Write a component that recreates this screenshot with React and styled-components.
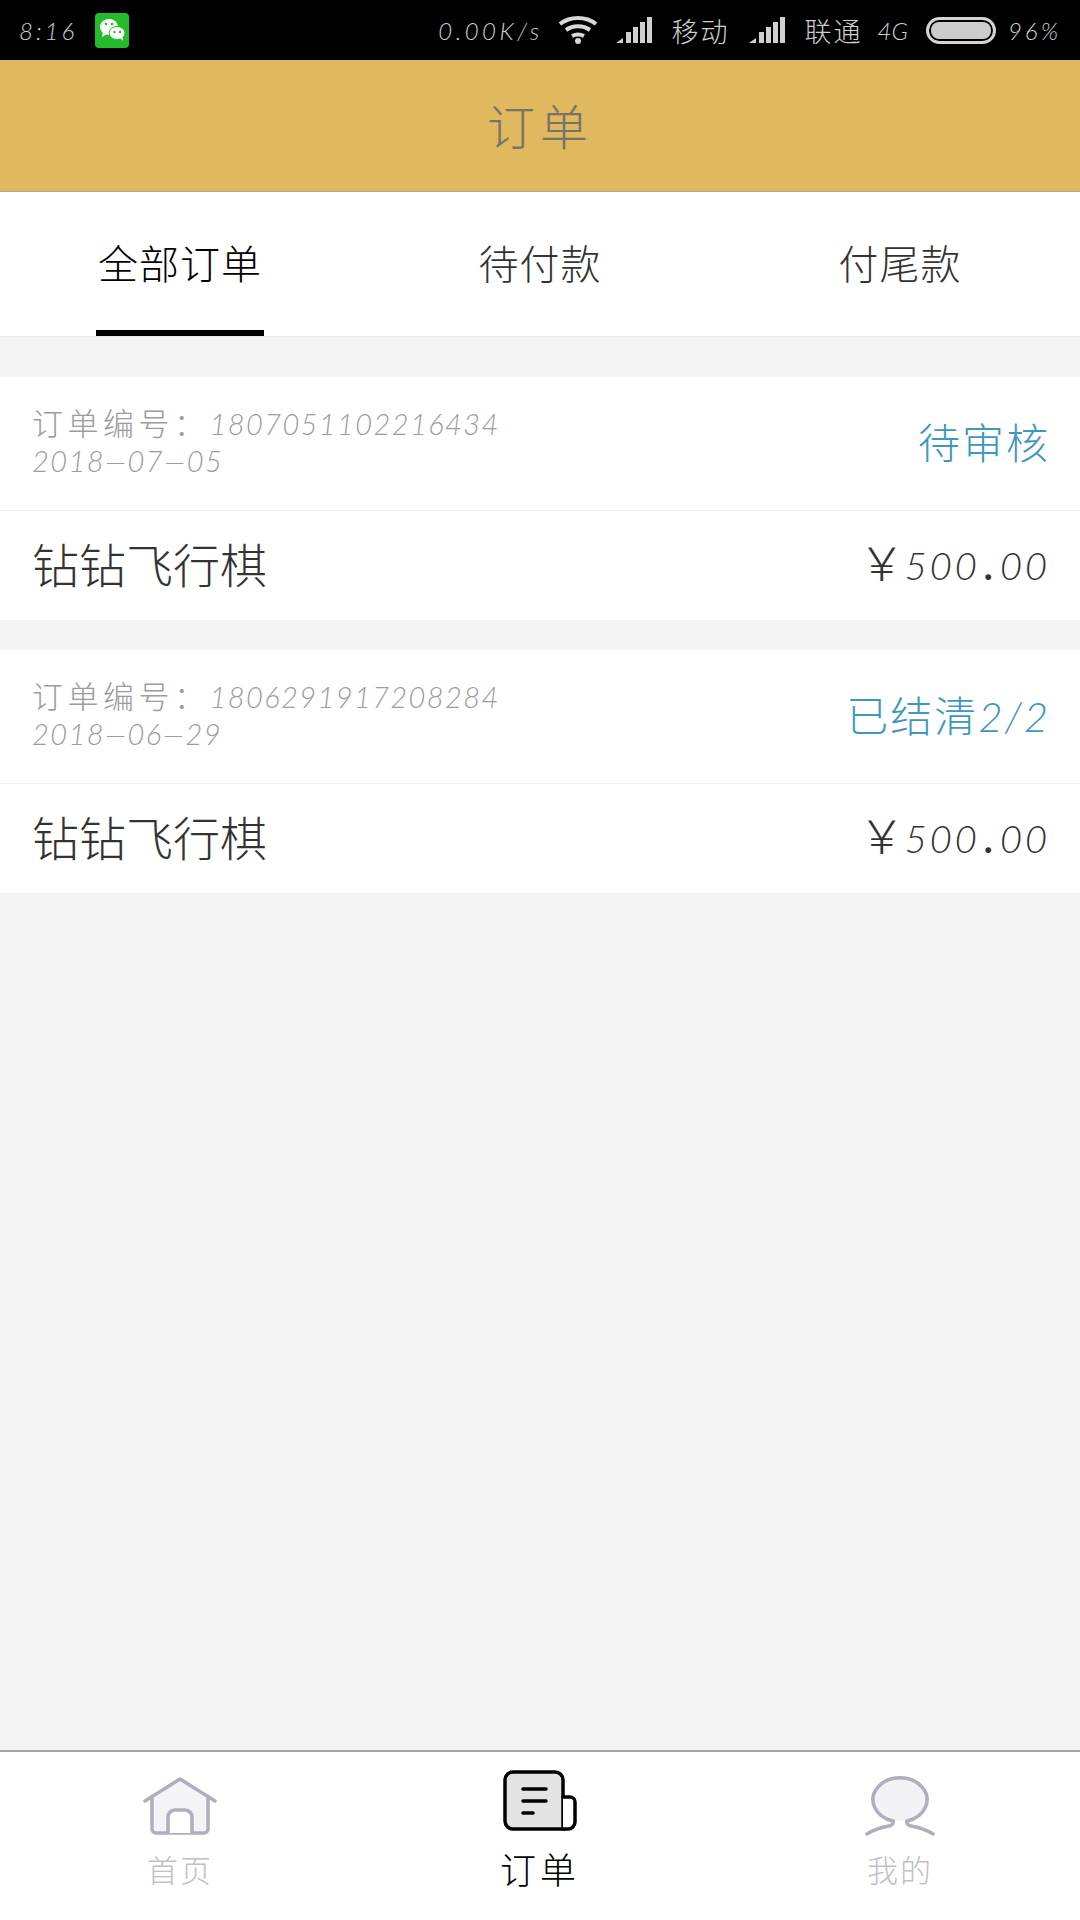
import React from 'react'
import styled, { createGlobalStyle } from 'styled-components'

const GlobalStyle = createGlobalStyle`
  html, body {
    margin: 0;
    padding: 0;
    background: #f4f4f4;
  }
  * {
    box-sizing: border-box;
  }
`

const hand = `Lato, "Noto Sans CJK SC", sans-serif`

const Page = styled.div`
  width: 1080px;
  height: 1920px;
  display: flex;
  flex-direction: column;
  background: #f4f4f4;
  font-family: ${hand};
  font-weight: 300;
  overflow: hidden;
`

const StatusBar = styled.div`
  height: 60px;
  background: #000;
  color: #cfcfcf;
  display: flex;
  align-items: center;
  padding: 0 19px;
  font-size: 24px;
  font-style: italic;
  letter-spacing: 3px;
`

const Clock = styled.span`
  margin-right: 18px;
`

const Net = styled.span`
  margin-left: auto;
  margin-right: 15px;
  letter-spacing: 3.5px;
`

const WifiSlot = styled.span`
  display: flex;
  margin-right: 18px;
`

const Carrier = styled.span`
  font-style: normal;
  font-size: 27px;
  letter-spacing: 2px;
  margin-left: 19px;
  margin-right: ${p => p.$gap}px;
`

const Gen = styled.span`
  letter-spacing: 0;
  margin-right: 18px;
`

const Battery = styled.div`
  width: 70px;
  height: 27px;
  border: 3px solid #d4d4d4;
  border-radius: 14px;
  padding: 2px;
  margin-right: 12px;
  &::after {
    content: '';
    display: block;
    height: 100%;
    background: #cccccc;
    border-radius: 8px;
  }
`

const Header = styled.header`
  height: 132px;
  background: #e0b85e;
  border-bottom: 1px solid #b5a77f;
  padding-bottom: 4px;
  display: flex;
  align-items: center;
  justify-content: center;
  color: #77736a;
  font-size: 48px;
  letter-spacing: 5px;
`

const Tabs = styled.nav`
  height: 145px;
  background: #fff;
  display: grid;
  grid-template-columns: repeat(3, 1fr);
  border-bottom: 1px solid #eeeeee;
`

const Tab = styled.div`
  display: flex;
  justify-content: center;
  align-items: center;
  padding-bottom: 4px;
  position: relative;
  font-size: 40px;
  letter-spacing: 1px;
  color: ${p => (p.$active ? '#000' : '#333')};
  &::after {
    content: '';
    display: ${p => (p.$active ? 'block' : 'none')};
    position: absolute;
    left: 96px;
    bottom: 0;
    width: 168px;
    height: 6px;
    background: #000;
  }
`

const Orders = styled.main`
  flex: 1;
  padding-top: 40px;
  display: flex;
  flex-direction: column;
  gap: 30px;
`

const Card = styled.section`
  background: #fff;
`

const CardHead = styled.div`
  height: 134px;
  padding: 28px 30px 0 32px;
  display: flex;
  justify-content: space-between;
  border-bottom: 1px solid #f2f2f2;
`

const Meta = styled.div`
  color: #9c9c9c;
  font-size: 29px;
  line-height: 37px;
  font-style: italic;
  letter-spacing: 1.4px;
`

const MetaLabel = styled.span`
  font-style: normal;
  font-size: 31px;
  letter-spacing: 4.5px;
`

const Status = styled.div`
  color: #3f97bf;
  font-size: 42px;
  line-height: 44px;
  margin-top: 16px;
  letter-spacing: 2px;
`

const StatusNum = styled.span`
  font-style: italic;
`

const CardRow = styled.div`
  height: 109px;
  padding: 0 30px 6px 32px;
  display: flex;
  justify-content: space-between;
  align-items: center;
  color: #333;
`

const Name = styled.div`
  font-size: 47px;
`

const Price = styled.div`
  font-size: 38px;
  font-style: italic;
  letter-spacing: 3px;
  display: flex;
  align-items: baseline;
  margin-bottom: 6px;
`

const Yen = styled.span`
  font-size: 46px;
  font-style: normal;
  letter-spacing: 0;
`

const Dot = styled.span`
  margin: 0 3px 0 5px;
  font-weight: 700;
`

const BottomNav = styled.nav`
  height: 170px;
  background: #fff;
  border-top: 2px solid #a6a6a6;
  display: grid;
  grid-template-columns: repeat(3, 1fr);
`

const NavItem = styled.div`
  display: flex;
  flex-direction: column;
  align-items: center;
  padding-top: 18px;
  font-size: ${p => (p.$active ? 36 : 31)}px;
  line-height: 44px;
  letter-spacing: ${p => (p.$active ? 4 : 2)}px;
  color: ${p => (p.$active ? '#000' : '#bfc0c8')};
  svg {
    display: block;
    margin-bottom: 12px;
  }
`

const WechatIcon = () => (
  <svg width="34" height="35" viewBox="0 0 34 35">
    <rect width="34" height="35" rx="4" fill="#25bb2b" />
    <ellipse cx="14" cy="14" rx="9" ry="8" fill="#fff" />
    <path d="M8 19l-1 5 5-3z" fill="#fff" />
    <ellipse cx="22" cy="20" rx="8" ry="6.5" fill="#fff" stroke="#25bb2b" strokeWidth="1" />
    <path d="M25 25l3 3-.5-5z" fill="#fff" />
    <circle cx="11" cy="11" r="1.3" fill="#25bb2b" />
    <circle cx="17" cy="11" r="1.3" fill="#25bb2b" />
    <circle cx="19.5" cy="19" r="1.2" fill="#25bb2b" />
    <circle cx="25" cy="19" r="1.2" fill="#25bb2b" />
  </svg>
)

const WifiIcon = () => (
  <svg width="40" height="30" viewBox="0 0 40 30" fill="none" stroke="#d8d8d8" strokeWidth="4">
    <path d="M2 9c10-8 26-8 36 0" />
    <path d="M8 15c7-5 17-5 24 0" />
    <path d="M14 21c4-2 8-2 12 0" />
    <circle cx="20" cy="26" r="3" fill="#d8d8d8" stroke="none" />
  </svg>
)

const SignalIcon = () => (
  <svg width="37" height="26" viewBox="0 0 37 26" fill="#d0d0d0">
    <path d="M0 26L7 21V26z" />
    <rect x="10" y="15" width="5" height="11" />
    <rect x="17" y="10" width="5" height="16" />
    <rect x="24" y="5" width="5" height="21" />
    <rect x="31" y="0" width="5" height="26" />
  </svg>
)

const HomeIcon = () => (
  <svg width="74" height="66" viewBox="0 0 74 66" fill="none">
    <path d="M9 30L37 9l28 21v28a4 4 0 0 1-4 4H13a4 4 0 0 1-4-4z" fill="#f4f4f8" />
    <path d="M2 31L37 9l35 22M9 27v32a4 4 0 0 0 4 4h48a4 4 0 0 0 4-4V27" stroke="#adafbc" strokeWidth="3.5" strokeLinecap="round" strokeLinejoin="round" />
    <path d="M25 63V47a7 7 0 0 1 7-7h10a7 7 0 0 1 7 7v16" fill="#fff" stroke="#adafbc" strokeWidth="3.5" />
  </svg>
)

const OrderIcon = () => (
  <svg width="74" height="66" viewBox="0 0 74 66" fill="none" stroke="#000" strokeWidth="3.5" strokeLinecap="round">
    <path d="M2 10a8 8 0 0 1 8-8h42a8 8 0 0 1 8 8v49H10a8 8 0 0 1-8-8z" fill="#e4e4e4" />
    <path d="M60 27h7a5 5 0 0 1 5 5v20a7 7 0 0 1-7 7h-5" fill="#fff" />
    <path d="M20 19h23M20 31h23M20 43h10" />
  </svg>
)

const UserIcon = () => (
  <svg width="74" height="66" viewBox="0 0 74 66" fill="none" strokeLinecap="round">
    <path d="M30 51A27 22 0 1 1 44 51H30z" fill="#f3f3f6" />
    <path
      d="M4 64C12 59 20 57 26 56Q31 55 30 51A27 22 0 1 1 44 51Q43 55 48 56C54 57 62 59 70 64"
      stroke="#adafbc"
      strokeWidth="3.5"
    />
  </svg>
)

const orders = [
  { no: '1807051102216434', date: '2018—07—05', status: '待审核', num: '' },
  { no: '1806291917208284', date: '2018—06—29', status: '已结清', num: '2/2' },
]

export default function App() {
  return (
    <Page>
      <GlobalStyle />
      <StatusBar>
        <Clock>8:16</Clock>
        <WechatIcon />
        <Net>0.00K/s</Net>
        <WifiSlot><WifiIcon /></WifiSlot>
        <SignalIcon />
        <Carrier $gap={19}>移动</Carrier>
        <SignalIcon />
        <Carrier $gap={15}>联通</Carrier>
        <Gen>4G</Gen>
        <Battery />
        <span>96%</span>
      </StatusBar>
      <Header>订单</Header>
      <Tabs>
        <Tab $active>全部订单</Tab>
        <Tab>待付款</Tab>
        <Tab>付尾款</Tab>
      </Tabs>
      <Orders>
        {orders.map(o => (
          <Card key={o.no}>
            <CardHead>
              <Meta>
                <div><MetaLabel>订单编号：</MetaLabel>{o.no}</div>
                <div>{o.date}</div>
              </Meta>
              <Status>{o.status}<StatusNum>{o.num}</StatusNum></Status>
            </CardHead>
            <CardRow>
              <Name>钻钻飞行棋</Name>
              <Price><Yen>￥</Yen>500<Dot>.</Dot>00</Price>
            </CardRow>
          </Card>
        ))}
      </Orders>
      <BottomNav>
        <NavItem><HomeIcon />首页</NavItem>
        <NavItem $active><OrderIcon />订单</NavItem>
        <NavItem><UserIcon />我的</NavItem>
      </BottomNav>
    </Page>
  )
}
